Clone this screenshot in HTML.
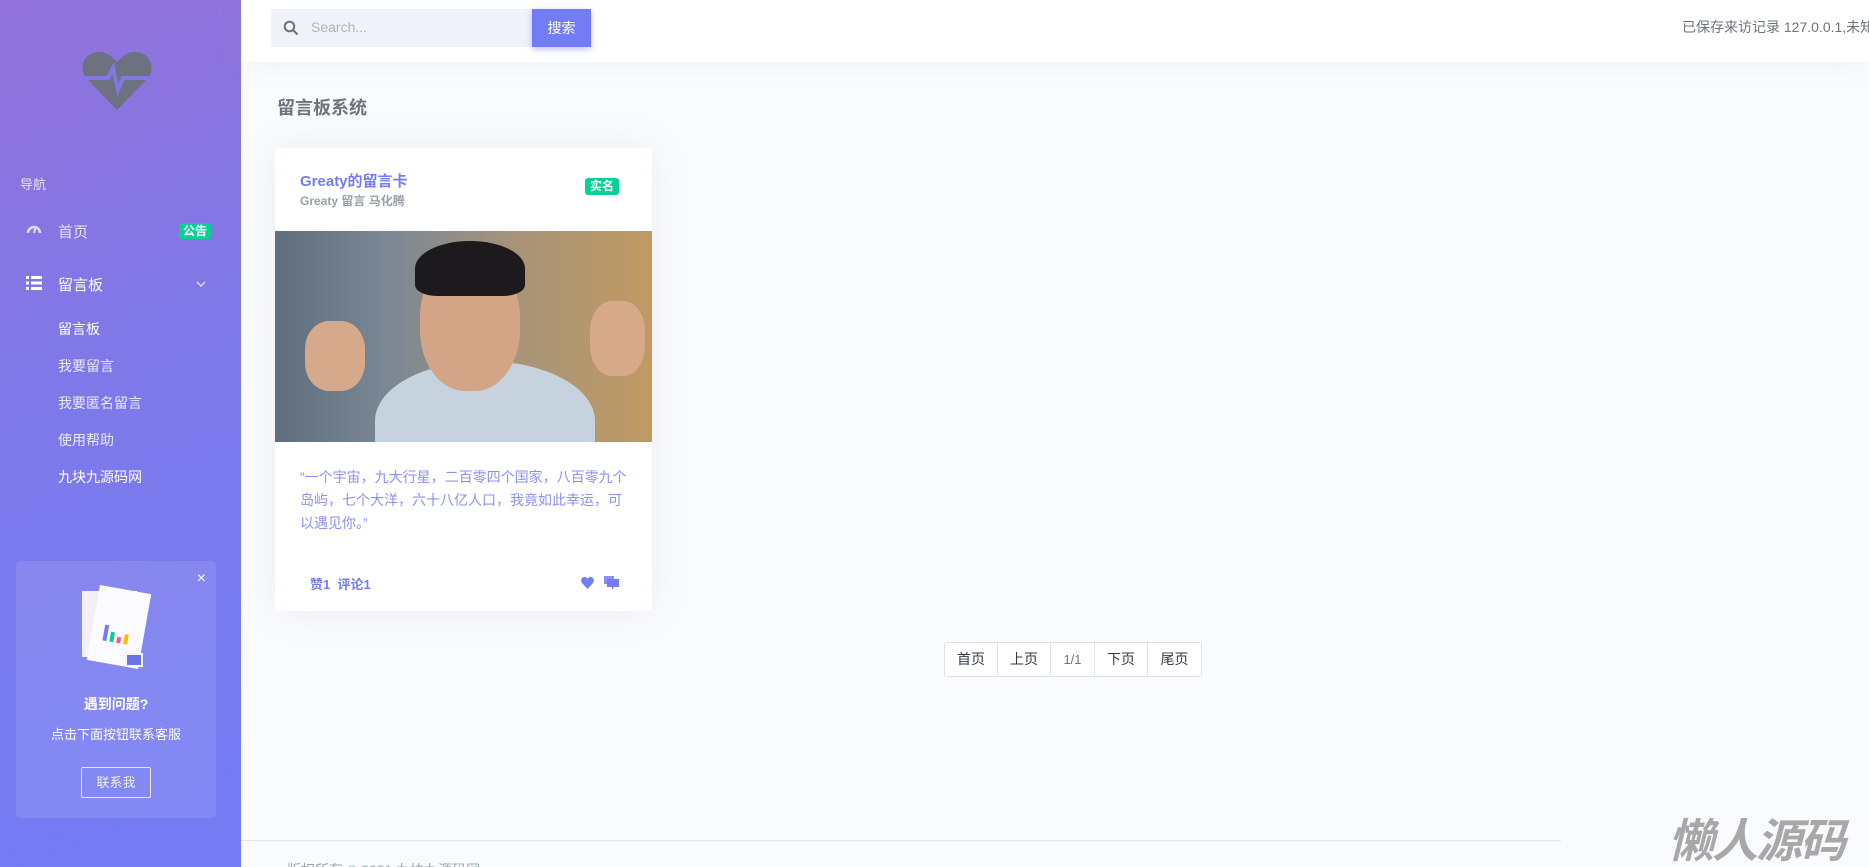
<!DOCTYPE html>
<html><head><meta charset="utf-8"><style>
*{margin:0;padding:0;box-sizing:border-box}
html,body{width:1869px;height:867px;overflow:hidden;background:#fafbfe}
body{font-family:"Liberation Sans","Noto Sans CJK SC",sans-serif;position:relative}
.abs{position:absolute}
#side{left:0;top:0;width:241px;height:900px;background:linear-gradient(160deg,#9272da 0%,#7d79ea 45%,#727cf5 100%)}
.nav{color:#f1f1fb;font-size:15px;left:58px}
.sub{color:#e9eafc;font-size:14px;left:58px}
</style></head><body>
<div id="side" class="abs">
 <svg class="abs" style="left:82px;top:50px" width="70" height="60" viewBox="0 0 70 60">
  <path d="M35 60 L4 28 C-4 18 2 2 17 2 C26 2 31 8 35 12 C39 8 44 2 53 2 C68 2 74 18 66 28 Z" fill="#6c7280"/>
  <path d="M0 28 H26 L31 18 L36 40 L41 28 H70" stroke="#8377e4" stroke-width="4" fill="none"/>
 </svg>
 <div class="abs" style="left:20px;top:174px;color:#e6e3f7;font-size:13px">导航</div>
 <svg class="abs" style="left:26px;top:222px" width="16" height="12" viewBox="0 0 16 12"><path d="M2 11 A6 6 0 0 1 14 11" stroke="#dcdcf5" stroke-width="2.5" fill="none"/><path d="M8 11 L10 4" stroke="#dcdcf5" stroke-width="2"/></svg>
 <div class="abs nav" style="top:221px;color:#e2e2f7">首页</div>
 <div class="abs" style="left:179px;top:223px;width:32px;height:16px;background:#0acf97;color:#fff;font-size:12px;font-weight:bold;text-align:center;line-height:16px;border-radius:3px">公告</div>
 <svg class="abs" style="left:26px;top:276px" width="16" height="14" viewBox="0 0 16 14"><g fill="#fff"><rect x="0" y="0" width="3" height="3"/><rect x="5" y="0" width="11" height="3"/><rect x="0" y="5.5" width="3" height="3"/><rect x="5" y="5.5" width="11" height="3"/><rect x="0" y="11" width="3" height="3"/><rect x="5" y="11" width="11" height="3"/></g></svg>
 <div class="abs nav" style="top:274px;color:#fff">留言板</div>
 <svg class="abs" style="left:196px;top:281px" width="10" height="7" viewBox="0 0 10 7"><path d="M1 1 L5 5 L9 1" stroke="#dcdcf5" stroke-width="1.5" fill="none"/></svg>
 <div class="abs sub" style="top:319px;color:#fff">留言板</div>
 <div class="abs sub" style="top:356px">我要留言</div>
 <div class="abs sub" style="top:393px">我要匿名留言</div>
 <div class="abs sub" style="top:430px">使用帮助</div>
 <div class="abs sub" style="top:467px;color:#fff">九块九源码网</div>
 <div class="abs" style="left:16px;top:561px;width:200px;height:257px;background:rgba(255,255,255,0.1);border-radius:5px">
  <div class="abs" style="right:10px;top:9px;color:#fff;font-size:16px">×</div>
  <div class="abs" style="left:66px;top:30px;width:55px;height:66px;background:#f0f0f6"></div>
  <div class="abs" style="left:77px;top:28px;width:52px;height:76px;background:#fbfbfe;transform:rotate(10deg)">
   <div class="abs" style="left:12px;top:38px;width:4px;height:16px;background:#727cf5"></div>
   <div class="abs" style="left:19px;top:44px;width:4px;height:10px;background:#0acf97"></div>
   <div class="abs" style="left:26px;top:48px;width:4px;height:6px;background:#fa5c7c"></div>
   <div class="abs" style="left:33px;top:44px;width:4px;height:10px;background:#ffbc00"></div>
  </div>
  <div class="abs" style="left:109px;top:92px;width:18px;height:14px;background:#6a74e8;border:2px solid #f5f5fa"></div>
  <div class="abs" style="left:0;width:200px;top:133px;text-align:center;color:#fff;font-weight:bold;font-size:14px">遇到问题?</div>
  <div class="abs" style="left:0;width:200px;top:163px;text-align:center;color:#fff;font-size:13px">点击下面按钮联系客服</div>
  <div class="abs" style="left:65px;top:206px;width:70px;height:31px;border:1px solid #e6e6fa;border-radius:2px;color:#eee;font-size:13px;text-align:center;line-height:29px">联系我</div>
 </div>
</div>
<div class="abs" style="left:241px;top:0;width:1628px;height:62px;background:#fff;box-shadow:0 0 30px rgba(154,161,171,.12)"></div>
<div class="abs" style="left:271px;top:9px;width:261px;height:38px;background:#f1f3fa"></div>
<svg class="abs" style="left:283px;top:20px" width="16" height="16" viewBox="0 0 16 16"><circle cx="6.5" cy="6.5" r="4.8" stroke="#6c757d" stroke-width="2" fill="none"/><path d="M10 10 L14.5 14.5" stroke="#6c757d" stroke-width="2.2"/></svg>
<div class="abs" style="left:311px;top:19px;color:#adb5bd;font-size:14px">Search...</div>
<div class="abs" style="left:532px;top:9px;width:59px;height:38px;background:#727cf5;color:#fff;font-size:14px;text-align:center;line-height:38px;box-shadow:0 2px 6px rgba(114,124,245,.5)">搜索</div>
<div class="abs" style="left:1682px;top:17px;color:#6c757d;font-size:14px;white-space:nowrap">已保存来访记录 127.0.0.1,未知</div>
<div class="abs" style="left:277px;top:94px;color:#6c757d;font-size:18px;font-weight:bold">留言板系统</div>
<div class="abs" style="left:275px;top:148px;width:377px;height:463px;background:#fff;border-radius:4px;box-shadow:0 0 35px rgba(154,161,171,.15);overflow:hidden">
 <div class="abs" style="left:25px;top:22px;color:#727cf5;font-size:15px;font-weight:bold">Greaty的留言卡</div>
 <div class="abs" style="left:25px;top:44px;color:#98a0a8;font-size:12px;font-weight:bold">Greaty 留言 马化腾</div>
 <div class="abs" style="left:310px;top:30px;width:34px;height:17px;background:#0acf97;color:#fff;font-size:12px;font-weight:bold;text-align:center;line-height:17px;border-radius:3px">实名</div>
 <div class="abs" style="left:0;top:83px;width:377px;height:211px;background:linear-gradient(90deg,#5f6e7c 0%,#7b8795 30%,#a89478 65%,#c09a62 100%);overflow:hidden">
  <div class="abs" style="left:100px;top:130px;width:220px;height:120px;background:#c6d3de;border-radius:50% 50% 0 0"></div>
  <div class="abs" style="left:145px;top:25px;width:100px;height:135px;background:#d3a586;border-radius:45%"></div>
  <div class="abs" style="left:140px;top:10px;width:110px;height:55px;background:#1c1a1c;border-radius:50% 50% 20% 20%"></div>
  <div class="abs" style="left:30px;top:90px;width:60px;height:70px;background:#d6a98a;border-radius:40%"></div>
  <div class="abs" style="left:315px;top:70px;width:55px;height:75px;background:#d6a98a;border-radius:40%"></div>
 </div>
 <div class="abs" style="left:25px;top:318px;width:330px;color:#8b91f2;font-size:14px;line-height:23px">“一个宇宙，九大行星，二百零四个国家，八百零九个岛屿，七个大洋，六十八亿人口，我竟如此幸运，可以遇见你。”</div>
 <div class="abs" style="left:35px;top:426px;color:#727cf5;font-size:13px;font-weight:bold">赞1 &nbsp;评论1</div>
 <svg class="abs" style="left:306px;top:429px" width="13" height="12" viewBox="0 0 13 12"><path d="M6.5 12 L1 6 C-1 3 1 0 3.5 0 C5 0 6 1 6.5 2 C7 1 8 0 9.5 0 C12 0 14 3 12 6 Z" fill="#727cf5"/></svg>
 <svg class="abs" style="left:329px;top:428px" width="15" height="14" viewBox="0 0 15 14"><rect x="0" y="0" width="10" height="8" fill="#8b91f2"/><path d="M3 3 H15 V11 H10 L8 14 L8 11 H3 Z" fill="#727cf5"/></svg>
</div>
<div class="abs" style="left:944px;top:642px;height:35px;display:flex;border:1px solid #dee2e6;border-radius:3px;background:#fff;font-size:14px;color:#313a46">
 <div style="width:53px;text-align:center;line-height:33px;border-right:1px solid #dee2e6">首页</div>
 <div style="width:53px;text-align:center;line-height:33px;border-right:1px solid #dee2e6">上页</div>
 <div style="width:44px;text-align:center;line-height:33px;border-right:1px solid #dee2e6;color:#6c757d;font-size:13px">1/1</div>
 <div style="width:53px;text-align:center;line-height:33px;border-right:1px solid #dee2e6">下页</div>
 <div style="width:53px;text-align:center;line-height:33px">尾页</div>
</div>
<div class="abs" style="left:241px;top:840px;width:1320px;height:1px;background:#e6e8ef"></div>
<div class="abs" style="left:287px;top:860px;color:#98a6ad;font-size:14px">版权所有 © 2021 九块九源码网</div>
<div class="abs" style="left:1668px;top:805px;color:#a8a8a8;font-size:46px;font-weight:bold;font-style:italic;letter-spacing:-2px;font-family:'Noto Sans CJK SC',sans-serif">懒人源码</div>
</body></html>
